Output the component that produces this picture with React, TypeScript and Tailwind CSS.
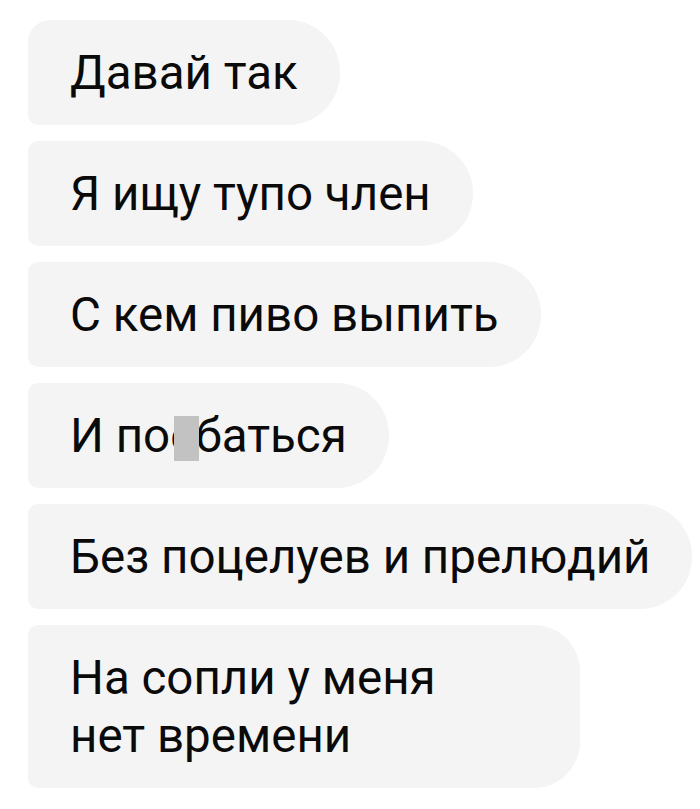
import React from "react";

const Bubble = ({
  children,
  first,
  className = "",
}: {
  children: React.ReactNode;
  first?: boolean;
  className?: string;
}) => (
  <div
    className={`bg-[#f4f4f4] pl-[42px] pr-[42px] py-[23.5px] text-[47.5px] leading-[58px] text-[#0a0a0a] ${first ? "rounded-tl-[22px]" : "rounded-tl-[10px]"} rounded-bl-[10px] ${className}`}
  >
    {children}
  </div>
);

export default function App() {
  return (
    <div
      className="w-[700px] h-[809px] bg-white pt-[20px] pl-[28px] flex flex-col gap-[16px]"
      style={{ fontFamily: "Roboto, 'Noto Sans', sans-serif" }}
    >
      <Bubble first className="w-fit rounded-r-[52px]">Давай так</Bubble>
      <Bubble className="w-fit rounded-r-[52px]">Я ищу тупо член</Bubble>
      <Bubble className="w-fit rounded-r-[52px]">С кем пиво выпить</Bubble>
      <Bubble className="w-fit rounded-r-[52px]">
        И по
        <span className="relative">
          е
          <span className="absolute left-[4px] top-[8px] w-[25px] h-[45px] bg-[#c2c2c2]" />
        </span>
        баться
      </Bubble>
      <Bubble className="w-fit rounded-r-[52px]">Без поцелуев и прелюдий</Bubble>
      <Bubble className="w-[552px] rounded-r-[46px]">
        На сопли у меня
        <br />
        нет времени
      </Bubble>
    </div>
  );
}
